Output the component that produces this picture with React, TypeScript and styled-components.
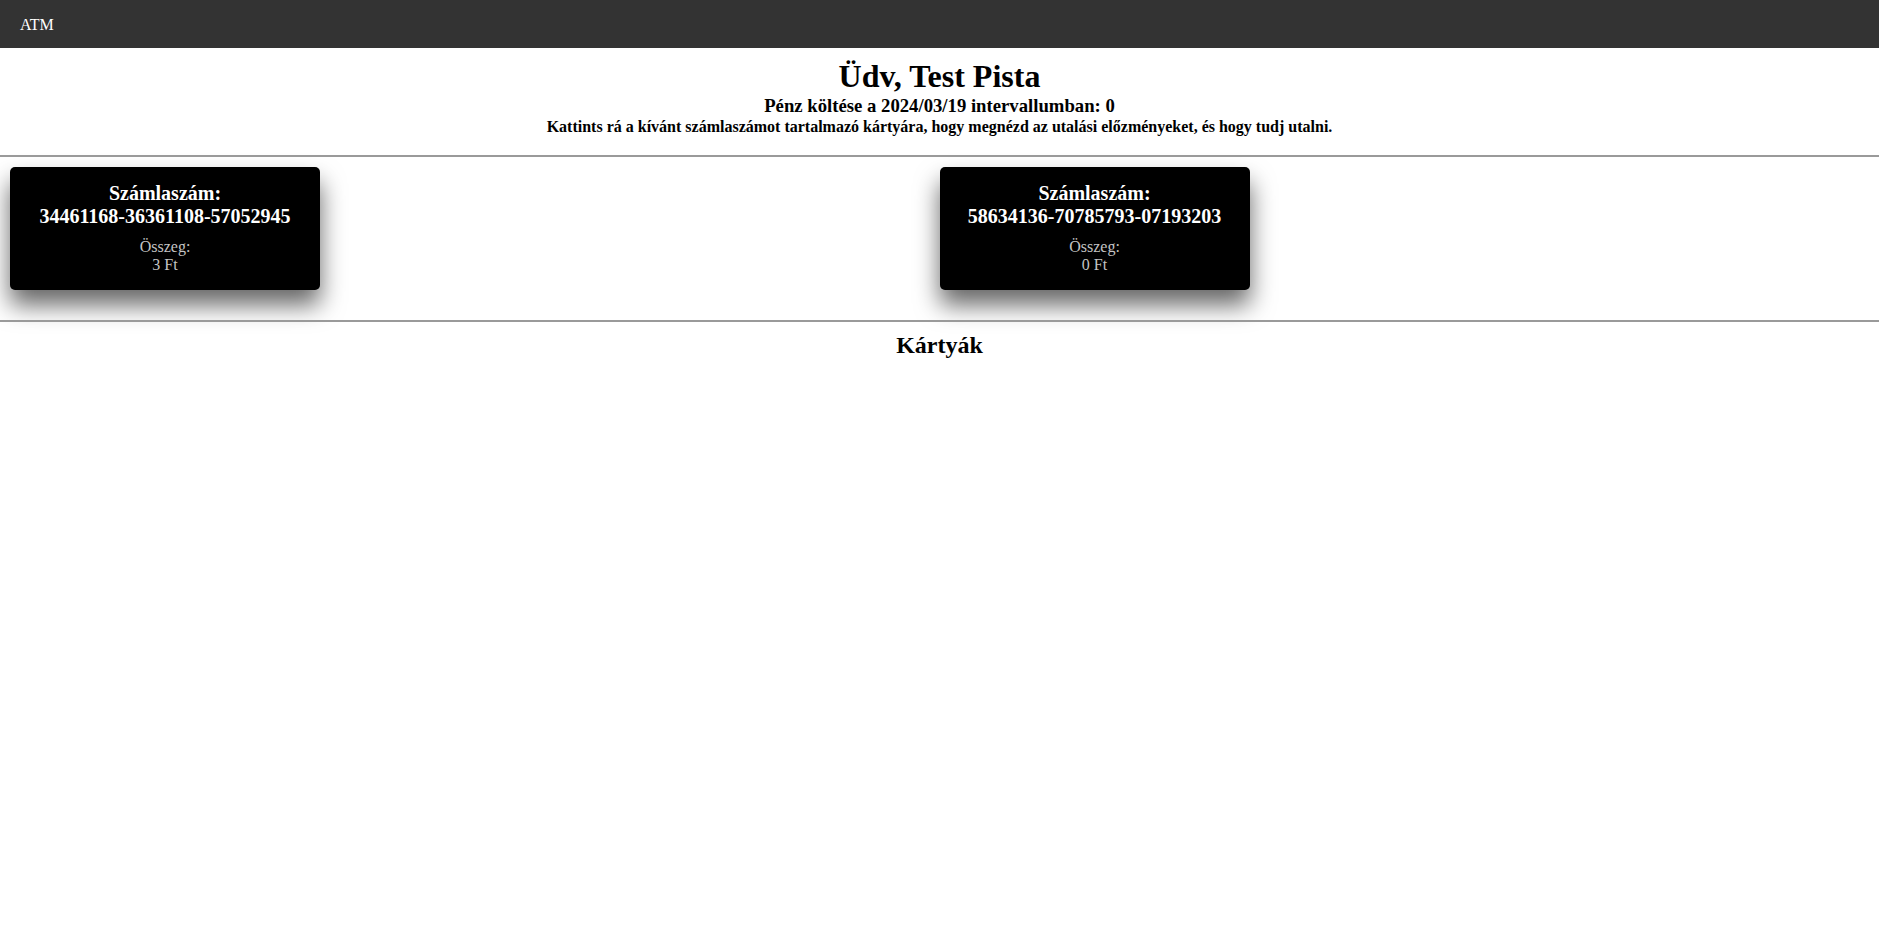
import styled, { createGlobalStyle } from "styled-components";

const GlobalStyle = createGlobalStyle`
  body {
    margin: 0;
    background: #ffffff;
    font-family: "Liberation Serif", "Times New Roman", serif;
    color: #000;
  }
`;

const accounts = [
  { number: "34461168-36361108-57052945", balance: 3 },
  { number: "58634136-70785793-07193203", balance: 0 },
];

const Navbar = styled.nav`
  height: 48px;
  background-color: #333333;
  display: flex;
  align-items: center;
  padding: 0 20px;
`;

const Brand = styled.span`
  color: #ffffff;
  font-size: 16px;
  line-height: 18px;
  padding-top: 1px;
`;

const Header = styled.header`
  text-align: center;
  padding-top: 10px;
`;

const Title = styled.h1`
  margin: 0;
  font-size: 32px;
  font-weight: 700;
`;

const Subtitle = styled.h3`
  margin: 0;
  font-size: 18.72px;
  font-weight: 700;
`;

const Hint = styled.h4`
  margin: 1px 0 0;
  font-size: 16px;
  font-weight: 700;
`;

const Divider = styled.hr<{ $top: number }>`
  margin: ${(p) => p.$top}px 0 0;
  border: none;
  border-top: 2px solid #9a9a9a;
  position: relative;
`;

const CardGrid = styled.section`
  display: grid;
  grid-template-columns: 1fr 1fr;
  justify-items: start;
  padding: 10px 10px 0;
`;

const Card = styled.div`
  width: 310px;
  box-sizing: border-box;
  background-color: #000000;
  border-radius: 5px;
  box-shadow: 0 15px 25px rgba(0, 0, 0, 0.6);
  padding: 15px 0 16px;
  text-align: center;
  cursor: pointer;
`;

const AccountLabel = styled.div`
  color: #ffffff;
  font-size: 20px;
  font-weight: 700;
`;

const Amount = styled.div`
  margin-top: 10px;
  color: #c4c4c4;
  font-size: 16px;
`;

const SectionTitle = styled.h2`
  margin: 10px 0 0;
  text-align: center;
  font-size: 24px;
  font-weight: 700;
`;

export default function App() {
  return (
    <>
      <GlobalStyle />
      <Navbar>
        <Brand>ATM</Brand>
      </Navbar>
      <Header>
        <Title>Üdv, Test Pista</Title>
        <Subtitle>Pénz költése a 2024/03/19 intervallumban: 0</Subtitle>
        <Hint>
          Kattints rá a kívánt számlaszámot tartalmazó kártyára, hogy megnézd az utalási előzményeket, és hogy tudj utalni.
        </Hint>
      </Header>
      <Divider $top={19} />
      <CardGrid>
        {accounts.map((a) => (
          <Card key={a.number}>
            <AccountLabel>
              Számlaszám:
              <br />
              {a.number}
            </AccountLabel>
            <Amount>
              Összeg:
              <br />
              {a.balance} Ft
            </Amount>
          </Card>
        ))}
      </CardGrid>
      <Divider $top={30} />
      <SectionTitle>Kártyák</SectionTitle>
    </>
  );
}
